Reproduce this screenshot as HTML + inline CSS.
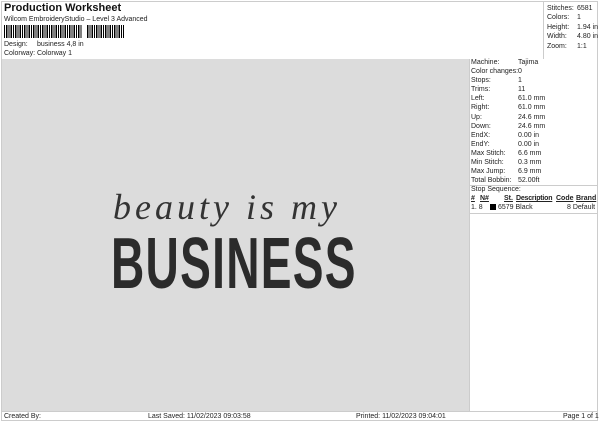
<!DOCTYPE html><html><head><style>
body{margin:0;width:600px;height:424px;background:#fff;font-family:"Liberation Sans",sans-serif;position:relative;overflow:hidden;font-size:7px;color:#222}
.a{position:absolute;white-space:nowrap}
</style></head><body>
<div class="a" style="left:1px;top:1px;width:597px;height:420px;border:1px solid #ccc;box-sizing:border-box"></div>
<div class="a" style="left:4px;top:2px;font-size:11px;font-weight:bold;color:#111">Production Worksheet</div>
<div class="a" style="left:4px;top:16px">Wilcom EmbroideryStudio – Level 3 Advanced</div>
<div class="a" style="left:4px;top:25px;width:120px;height:13px;background:repeating-linear-gradient(90deg,#000 0 1px,#fff 1px 2px,#000 2px 3.5px,#fff 3.5px 4.5px)"></div>
<div class="a" style="left:82px;top:25px;width:5px;height:13px;background:#fff"></div>
<div class="a" style="left:4px;top:41px">Design:</div><div class="a" style="left:37px;top:41px">business 4,8 in</div>
<div class="a" style="left:4px;top:50px">Colorway:</div><div class="a" style="left:37px;top:50px">Colorway 1</div>
<div class="a" style="left:2px;top:59px;width:467px;height:352px;background:#dcdcdc"></div>
<div class="a" style="left:543px;top:1px;width:1px;height:58px;background:#ccc"></div>
<div class="a" style="left:469px;top:59px;width:1px;height:352px;background:#ccc"></div>
<div class="a" style="left:547px;top:4px;line-height:9.4px">Stitches:<br>Colors:<br>Height:<br>Width:<br>Zoom:</div>
<div class="a" style="left:577px;top:4px;line-height:9.4px">6581<br>1<br>1.94 in<br>4.80 in<br>1:1</div>
<div class="a" style="left:471px;top:58px;line-height:9.1px">Machine:<br>Color changes:<br>Stops:<br>Trims:<br>Left:<br>Right:<br>Up:<br>Down:<br>EndX:<br>EndY:<br>Max Stitch:<br>Min Stitch:<br>Max Jump:<br>Total Bobbin:</div>
<div class="a" style="left:518px;top:58px;line-height:9.1px">Tajima<br>0<br>1<br>11<br>61.0 mm<br>61.0 mm<br>24.6 mm<br>24.6 mm<br>0.00 in<br>0.00 in<br>6.6 mm<br>0.3 mm<br>6.9 mm<br>52.00ft</div>
<div class="a" style="left:470px;top:185px;width:128px;height:1px;background:#ccc"></div>
<div class="a" style="left:471px;top:186px">Stop Sequence:</div>
<div class="a" style="left:471px;top:195px;font-weight:bold;text-decoration:underline">#</div>
<div class="a" style="left:480px;top:195px;font-weight:bold;text-decoration:underline">N#</div>
<div class="a" style="left:504px;top:195px;font-weight:bold;text-decoration:underline">St.</div>
<div class="a" style="left:516px;top:195px;font-weight:bold;text-decoration:underline;letter-spacing:-0.2px">Description</div>
<div class="a" style="left:556px;top:195px;font-weight:bold;text-decoration:underline">Code</div>
<div class="a" style="left:576px;top:195px;font-weight:bold;text-decoration:underline">Brand</div>
<div class="a" style="left:471px;top:204px">1. 8</div>
<div class="a" style="left:490px;top:204px;width:6px;height:6px;background:#000"></div>
<div class="a" style="left:498px;top:204px">6579 Black</div>
<div class="a" style="left:567px;top:204px">8 Default</div>
<div class="a" style="left:470px;top:213px;width:128px;height:1px;background:#ccc"></div>
<div class="a" style="left:113px;top:186px;font-family:'Liberation Serif',serif;font-style:italic;font-size:36px;color:#333;letter-spacing:4px">beauty is my</div>
<div class="a" style="left:111px;top:228px;font-size:72px;font-weight:bold;color:#2b2b2b;letter-spacing:2px;transform:scaleX(0.64);transform-origin:left;line-height:72px">BUSINESS</div>
<div class="a" style="left:1px;top:411px;width:597px;height:1px;background:#ccc"></div>
<div class="a" style="left:4px;top:413px">Created By:</div>
<div class="a" style="left:148px;top:413px">Last Saved: 11/02/2023 09:03:58</div>
<div class="a" style="left:356px;top:413px">Printed: 11/02/2023 09:04:01</div>
<div class="a" style="left:563px;top:413px">Page 1 of 1</div>
</body></html>
